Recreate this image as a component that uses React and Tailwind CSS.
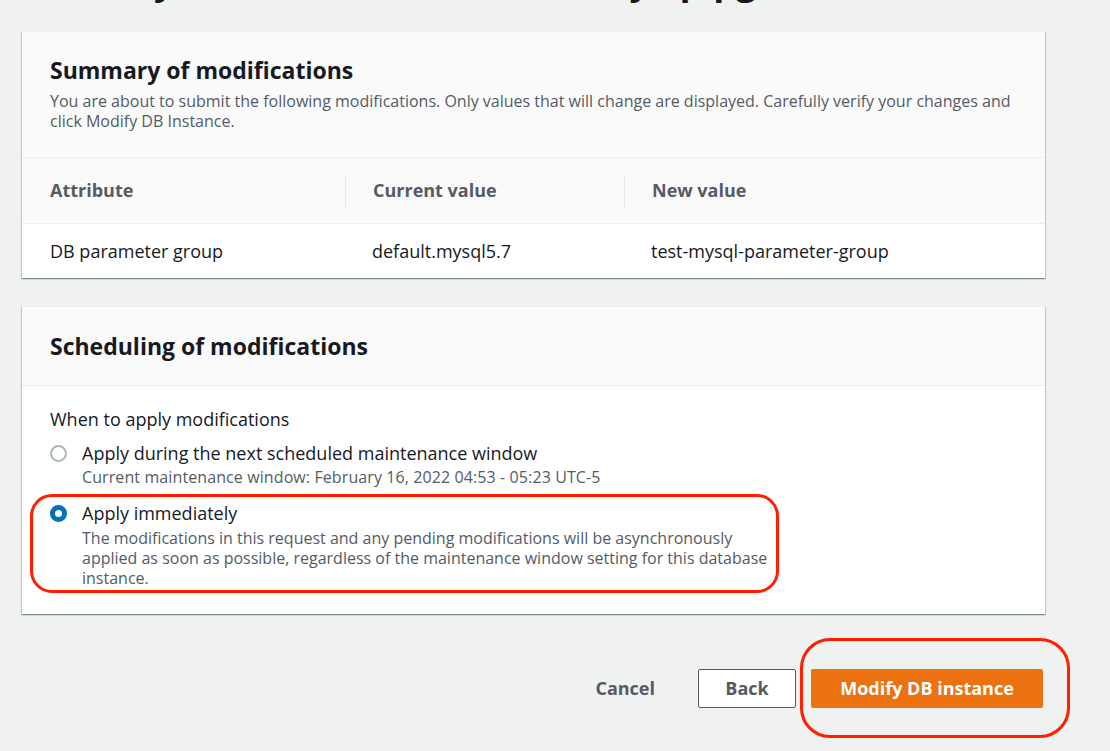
export default function App() {
  const cardShadow =
    'bg-white border-t border-[#eaeded] shadow-[0_1px_1px_0_rgba(0,28,36,0.3),1px_1px_1px_0_rgba(0,28,36,0.15),-1px_1px_1px_0_rgba(0,28,36,0.15)]';

  return (
    <div className="h-[751px] overflow-hidden bg-[#f0f1f1] pl-[22px] font-['Open_Sans',sans-serif] text-[#16191f]">
      {/* Page title, mostly scrolled out of view */}
      <h1 className="-mt-[41px] h-[44px] pl-[28px] text-[36px] font-bold leading-[44px] whitespace-nowrap">
        Modify DB instance: database-mysql-pg
      </h1>

      <div className="w-[1023px] pt-[28px]">
        {/* Summary card */}
        <section className={cardShadow}>
          <div className="bg-[#fafafa] px-[28px] pt-[23px] pb-[26px]">
            <h2 className="text-[23px] font-bold leading-[30px]">Summary of modifications</h2>
            <p className="mt-[6px] text-[16px] leading-[20px] text-[#545b64]">
              You are about to submit the following modifications. Only values that will change are displayed. Carefully verify your changes and click Modify DB Instance.
            </p>
          </div>

          <div className="grid grid-cols-[323px_279px_1fr] border-t border-[#eaeded]">
            <div className="flex h-[65px] items-center bg-[#fafafa] pl-[28px] text-[18px] font-bold text-[#545b64]">
              Attribute
            </div>
            <div className="flex h-[65px] items-center bg-[#fafafa] text-[18px] font-bold text-[#545b64]">
              <span className="h-[32px] w-px bg-[#e4e8e8]" />
              <span className="pl-[27px]">Current value</span>
            </div>
            <div className="flex h-[65px] items-center bg-[#fafafa] text-[18px] font-bold text-[#545b64]">
              <span className="h-[32px] w-px bg-[#e4e8e8]" />
              <span className="pl-[27px]">New value</span>
            </div>

            <div className="col-span-3 h-px bg-[#eaeded]" />

            <div className="flex h-[54px] items-center pl-[28px] text-[18px]">DB parameter group</div>
            <div className="flex h-[54px] items-center pl-[27px] text-[18px]">default.mysql5.7</div>
            <div className="flex h-[54px] items-center pl-[27px] text-[18px]">test-mysql-parameter-group</div>
          </div>
        </section>

        {/* Scheduling card */}
        <section className={`mt-[28px] ${cardShadow}`}>
          <div className="border-b border-[#eaeded] bg-[#fafafa] px-[28px] pt-[24px] pb-[24px]">
            <h2 className="text-[23px] font-bold leading-[30px]">Scheduling of modifications</h2>
          </div>

          <div className="px-[28px] pt-[22px] pb-[26px]">
            <div className="text-[18px] leading-[22px]">When to apply modifications</div>

            <div className="mt-[12px] flex gap-[15px]">
              <span className="mt-[2.5px] h-[17px] w-[17px] shrink-0 rounded-full border-2 border-[#aab7b8] bg-white" />
              <div>
                <div className="text-[18px] leading-[22px]">Apply during the next scheduled maintenance window</div>
                <div className="mt-[3px] text-[16px] leading-[20px] tracking-[0.1px] text-[#545b64]">
                  Current maintenance window: February 16, 2022 04:53 - 05:23 UTC-5
                </div>
              </div>
            </div>

            <div className="relative mt-[15px] flex gap-[15px]">
              <span className="mt-[2.5px] h-[17px] w-[17px] shrink-0 rounded-full border-[5px] border-[#0073bb] bg-white" />
              <div>
                <div className="text-[18px] leading-[22px]">Apply immediately</div>
                <div className="mt-[4px] max-w-[690px] text-[16px] leading-[20px] text-[#545b64]">
                  The modifications in this request and any pending modifications will be asynchronously applied as soon as possible, regardless of the maintenance window setting for this database instance.
                </div>
              </div>
              {/* annotation outline */}
              <div className="pointer-events-none absolute -top-[8px] -bottom-[5px] -left-[20px] w-[749px] rounded-[22px] border-[3px] border-[#ff1f00]" />
            </div>
          </div>
        </section>

        {/* Actions */}
        <div className="mt-[55px] flex items-center justify-end pr-[2px]">
          <button className="px-[20px] text-[18px] font-bold leading-[39px] text-[#545b64]">Cancel</button>
          <button className="ml-[23px] h-[39px] w-[98px] rounded-[2px] border border-[#545b64] bg-white text-[18px] font-bold text-[#545b64]">
            Back
          </button>
          <div className="relative ml-[15px]">
            <button className="h-[39px] w-[232px] rounded-[2px] bg-[#ec7211] text-[18px] font-bold text-white">
              Modify DB instance
            </button>
            {/* annotation outline */}
            <div className="pointer-events-none absolute -top-[31px] -bottom-[30px] -left-[11px] -right-[27px] rounded-[30px] border-[3px] border-[#ff1f00]" />
          </div>
        </div>
      </div>
    </div>
  );
}
